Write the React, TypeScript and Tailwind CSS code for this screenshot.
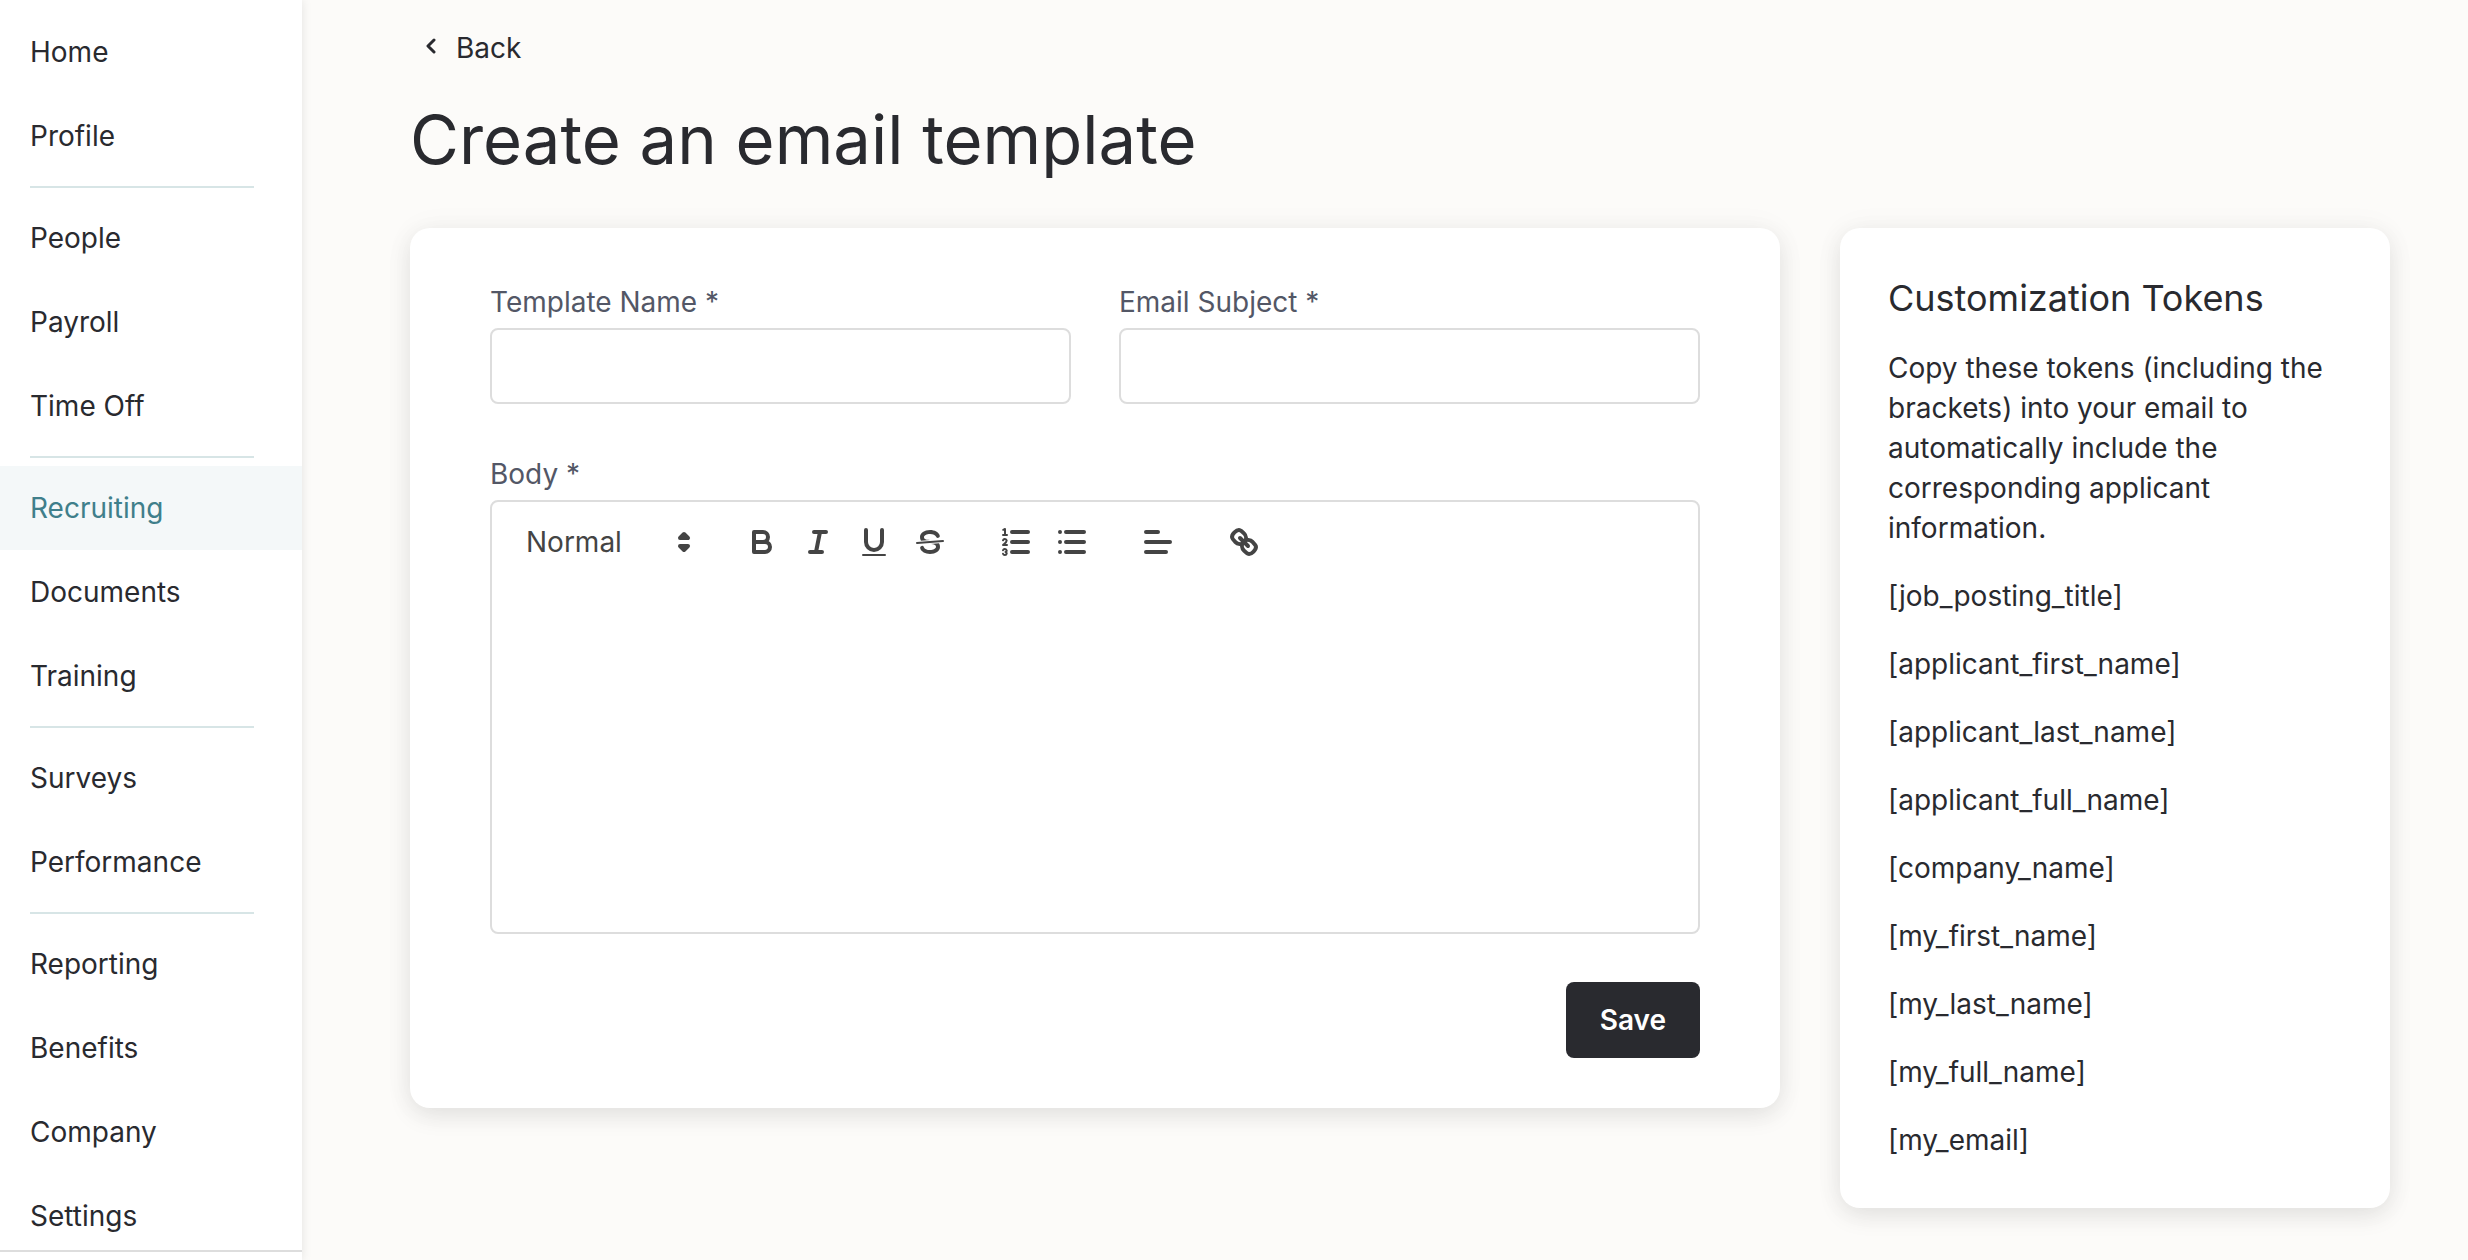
import { useState } from 'react'
import type { ReactNode } from 'react'

const navGroups = [
  ['Home', 'Profile'],
  ['People', 'Payroll', 'Time Off'],
  ['Recruiting', 'Documents', 'Training'],
  ['Surveys', 'Performance'],
  ['Reporting', 'Benefits', 'Company', 'Settings'],
]

const tokens = [
  'job_posting_title',
  'applicant_first_name',
  'applicant_last_name',
  'applicant_full_name',
  'company_name',
  'my_first_name',
  'my_last_name',
  'my_full_name',
  'my_email',
]

function Sidebar() {
  return (
    <aside className="sticky top-0 flex h-screen w-[302px] shrink-0 flex-col bg-white shadow-[0_0_10px_rgba(0,0,0,0.1)]">
      <nav className="min-h-0 flex-1 overflow-hidden pt-[10px]">
        {navGroups.map((group, i) => (
          <div key={group[0]}>
            {i > 0 && <hr className="my-2 mr-12 ml-[30px] border-t-2 border-[#d7e5e6]" />}
            {group.map((item) => (
              <a
                key={item}
                href="#"
                className={
                  item === 'Recruiting'
                    ? 'flex h-[84px] items-center bg-[#f4f8f9] px-[30px] text-[#3f7f8b]'
                    : 'flex h-[84px] items-center px-[30px]'
                }
              >
                {item}
              </a>
            ))}
          </div>
        ))}
      </nav>
      <div className="h-[10px] shrink-0 border-t-2 border-[#dddddd]" />
    </aside>
  )
}

function ToolButton({ label, children }: { label: string; children: ReactNode }) {
  return (
    <button type="button" aria-label={label} className="flex h-12 w-14 items-center justify-center">
      <svg
        viewBox="0 0 18 18"
        className="size-9"
        fill="none"
        stroke="currentColor"
        strokeWidth="2"
        strokeLinecap="round"
        strokeLinejoin="round"
      >
        {children}
      </svg>
    </button>
  )
}

function Toolbar() {
  return (
    <div className="flex flex-wrap items-center gap-[30px] p-4 text-[#444444]">
      <div className="relative w-[196px]">
        <select aria-label="Text style" className="h-12 w-full appearance-none bg-transparent pl-[18px] outline-none">
          <option>Normal</option>
          <option>Heading 1</option>
          <option>Heading 2</option>
        </select>
        <svg
          viewBox="0 0 18 18"
          className="pointer-events-none absolute top-1.5 right-0.5 size-9"
          fill="currentColor"
          stroke="currentColor"
          strokeWidth="2"
          strokeLinecap="round"
          strokeLinejoin="round"
        >
          <polygon points="7 11 9 13 11 11" />
          <polygon points="7 7 9 5 11 7" />
        </svg>
      </div>
      <div className="flex">
        <ToolButton label="Bold">
          <path d="M5,4H9.5A2.5,2.5,0,0,1,12,6.5v0A2.5,2.5,0,0,1,9.5,9H5V4Z" />
          <path d="M5,9h5.5A2.5,2.5,0,0,1,13,11.5v0A2.5,2.5,0,0,1,10.5,14H5V9Z" />
        </ToolButton>
        <ToolButton label="Italic">
          <path d="M7,4H13M5,14H11M8,14L10,4" />
        </ToolButton>
        <ToolButton label="Underline">
          <path d="M5,3V9a4.012,4.012,0,0,0,4,4H9a4.012,4.012,0,0,0,4-4V3" />
          <rect x="3" y="15" width="12" height="1" rx="0.5" fill="currentColor" stroke="none" />
        </ToolButton>
        <ToolButton label="Strikethrough">
          <path d="M15.5,8.5L2.5,9.5" strokeWidth="1" />
          <g fill="currentColor" stroke="none">
            <path d="M9.007,8C6.542,7.791,6,7.519,6,6.5,6,5.792,7.283,5,9,5c1.571,0,2.765.679,2.969,1.309a1,1,0,0,0,1.9-.617C13.356,4.106,11.354,3,9,3,6.2,3,4,4.538,4,6.5a3.2,3.2,0,0,0,.5,1.843Z" />
            <path d="M8.984,10C11.457,10.208,12,10.479,12,11.5c0,.708-1.283,1.5-3,1.5-1.571,0-2.765-.679-2.969-1.309a1,1,0,1,0-1.9.617C4.644,13.894,6.646,15,9,15c2.8,0,5-1.538,5-3.5a3.2,3.2,0,0,0-.5-1.843Z" />
          </g>
        </ToolButton>
      </div>
      <div className="flex">
        <ToolButton label="Numbered list">
          <path d="M7,4H15M7,9H15M7,14H15" />
          <g strokeWidth="1">
            <path d="M2.5,5.5H4.5M2.6,2.9L3.5,2.5V5.5" />
            <path d="M4.5,10.5h-2c0-.234,1.85-1.076,1.85-2.234A0.959,0.959,0,0,0,2.5,8.156" />
            <path d="M2.5,14.846a0.959,0.959,0,0,0,1.85-.109A0.7,0.7,0,0,0,3.75,14a0.688,0.688,0,0,0,.6-0.736,0.959,0.959,0,0,0-1.85-.109" />
          </g>
        </ToolButton>
        <ToolButton label="Bulleted list">
          <path d="M6,4H15M6,9H15M6,14H15M3,4H3M3,9H3M3,14H3" />
        </ToolButton>
      </div>
      <ToolButton label="Align">
        <path d="M3,9H15M3,14H13M3,4H9" />
      </ToolButton>
      <ToolButton label="Link">
        <path d="M7,7L11,11" />
        <path d="M8.9,4.577a3.476,3.476,0,0,1,.36,4.679A3.476,3.476,0,0,1,4.577,8.9C3.185,7.5,2.035,6.4,4.217,4.217S7.5,3.185,8.9,4.577Z" />
        <path d="M13.423,9.1a3.476,3.476,0,0,0-4.679-.36,3.476,3.476,0,0,0,.36,4.679c1.392,1.392,2.5,2.542,4.679.36S14.815,10.5,13.423,9.1Z" />
      </ToolButton>
    </div>
  )
}

interface FieldProps {
  id: string
  label: string
  value: string
  onChange: (value: string) => void
}

function Field({ id, label, value, onChange }: FieldProps) {
  return (
    <div className="flex flex-1 flex-col gap-1.5">
      <label htmlFor={id} className="text-[#535766]">
        {label} *
      </label>
      <input
        id={id}
        type="text"
        value={value}
        onChange={(e) => onChange(e.target.value)}
        className="h-[76px] w-full rounded-lg border-2 border-[#dddddd] bg-white px-5 outline-none"
        required
      />
    </div>
  )
}

export default function App() {
  const [name, setName] = useState('')
  const [subject, setSubject] = useState('')
  const [body, setBody] = useState('')

  return (
    <div className="flex min-h-screen bg-[#fcfbf9] font-['Inter','Liberation_Sans',sans-serif] text-[28px] leading-10 text-[#292a2f]">
      <Sidebar />
      <main className="min-w-0 flex-1 pt-7 pr-[78px] pb-12 pl-[108px]">
        <a href="#" className="inline-flex items-center gap-[18px] pl-3">
          <svg
            viewBox="0 0 16 20"
            className="h-5 w-4"
            fill="none"
            stroke="currentColor"
            strokeWidth="3"
            strokeLinecap="round"
            strokeLinejoin="round"
          >
            <path d="M12 2L6 8L12 14" />
          </svg>
          Back
        </a>
        <h1 className="mt-8 mb-12 text-[67px] leading-[80px]">Create an email template</h1>

        <div className="flex items-start gap-[60px]">
          <form
            onSubmit={(e) => e.preventDefault()}
            className="min-w-0 flex-1 rounded-[20px] bg-white px-20 pt-[54px] pb-[50px] shadow-[0_8px_24px_rgba(0,0,0,0.09),0_0_32px_rgba(0,0,0,0.04)]"
          >
            <div className="flex gap-12">
              <Field id="name" label="Template Name" value={name} onChange={setName} />
              <Field id="subject" label="Email Subject" value={subject} onChange={setSubject} />
            </div>

            <div className="mt-[50px] flex flex-col gap-1.5">
              <label htmlFor="body" className="text-[#535766]">
                Body *
              </label>
              <div className="rounded-lg border-2 border-[#dddddd]">
                <Toolbar />
                <textarea
                  id="body"
                  value={body}
                  onChange={(e) => setBody(e.target.value)}
                  className="block h-[350px] w-full resize-none px-[34px] py-4 outline-none"
                />
              </div>
            </div>

            <div className="mt-12 flex justify-end">
              <button type="submit" className="h-[76px] rounded-lg bg-[#292a2f] px-[34px] font-semibold text-white">
                Save
              </button>
            </div>
          </form>

          <section className="w-[550px] shrink-0 rounded-[20px] bg-white p-12 shadow-[0_8px_24px_rgba(0,0,0,0.09),0_0_32px_rgba(0,0,0,0.04)]">
            <h2 className="text-4xl leading-11">Customization Tokens</h2>
            <p className="mt-7">
              Copy these tokens (including the brackets) into your email to automatically include the corresponding
              applicant information.
            </p>
            <ul className="mt-7 flex flex-col gap-7">
              {tokens.map((token) => (
                <li key={token}>[{token}]</li>
              ))}
            </ul>
          </section>
        </div>
      </main>
    </div>
  )
}
